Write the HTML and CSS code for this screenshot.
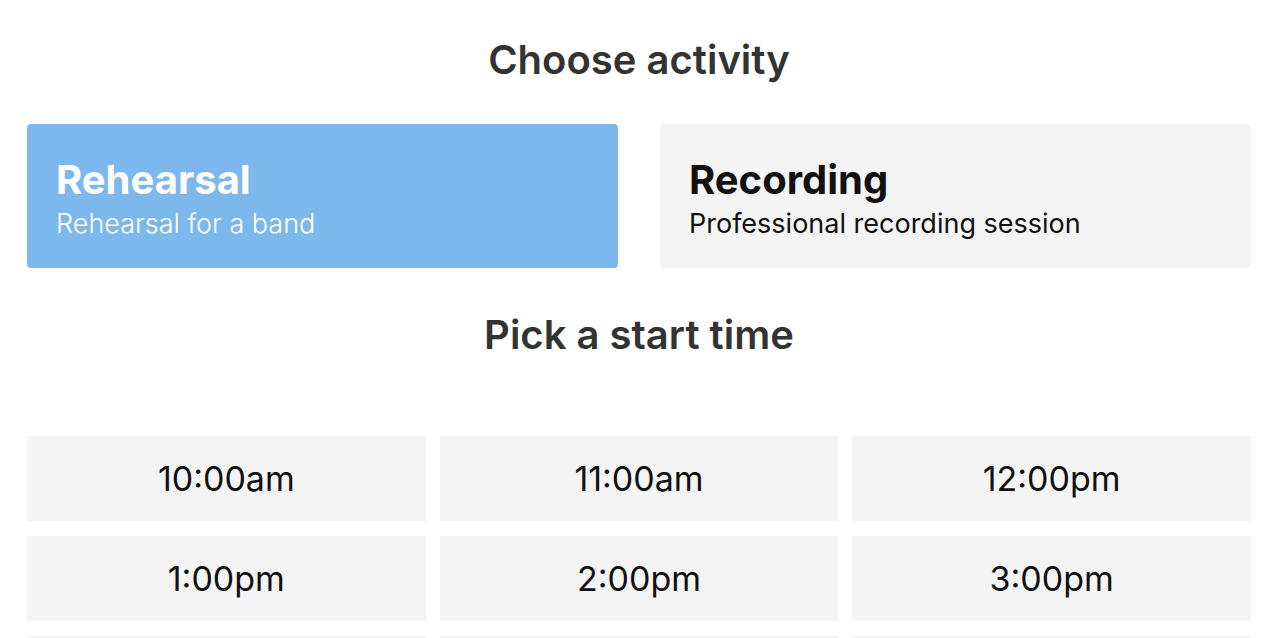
FILE: index.html
```html
<!DOCTYPE html>
<html>
<head>
  <meta charset="UTF-8">
  <title>Book a session</title>
  <link rel="stylesheet" href="styles.css">
</head>
<body>
  <div class="page">
    <h2 class="section-title">Choose activity</h2>

    <div class="activities">
      <div class="activity selected">
        <div class="activity-name">Rehearsal</div>
        <div class="activity-desc">Rehearsal for a band</div>
      </div>
      <div class="activity">
        <div class="activity-name">Recording</div>
        <div class="activity-desc">Professional recording session</div>
      </div>
    </div>

    <h2 class="section-title times-title">Pick a start time</h2>

    <div class="times">
      <div class="time">10:00am</div>
      <div class="time">11:00am</div>
      <div class="time">12:00pm</div>
      <div class="time">1:00pm</div>
      <div class="time">2:00pm</div>
      <div class="time">3:00pm</div>
      <div class="time">4:00pm</div>
      <div class="time">5:00pm</div>
      <div class="time">6:00pm</div>
    </div>
  </div>
</body>
</html>
```

FILE: styles.css
```css
body {
  margin: 0;
  padding: 0;
  font-family: Inter, 'Noto Sans', sans-serif;
  background: #fff;
  color: #111;
}
.page {
  padding: 0 31px 0 27px;
}
.section-title {
  margin: 0;
  text-align: center;
  font-size: 40px;
  font-weight: 600;
  color: #333;
  line-height: 48px;
  padding-top: 36px;
}
.activities {
  display: grid;
  grid-template-columns: 1fr 1fr;
  gap: 42px;
  margin-top: 40px;
}
.activity {
  background-color: #f4f4f4;
  border-radius: 4px;
  height: 144px;
  padding: 34px 29px 0;
  box-sizing: border-box;
  cursor: pointer;
}
.activity.selected {
  background-color: #7cb8ee;
  color: #fff;
}
.activity-name {
  font-size: 40px;
  font-weight: 700;
  line-height: 44px;
}
.activity-desc {
  font-size: 27px;
  font-weight: 400;
  line-height: 34px;
  margin-top: 5px;
}
.selected .activity-desc {
  font-weight: 300;
}
.times-title {
  padding-top: 43px;
}
.times {
  display: grid;
  grid-template-columns: repeat(3, 1fr);
  gap: 15px 14px;
  margin-top: 77px;
}
.time {
  background-color: #f4f4f4;
  height: 85px;
  display: flex;
  align-items: center;
  justify-content: center;
  font-size: 34px;
  cursor: pointer;
}
```
